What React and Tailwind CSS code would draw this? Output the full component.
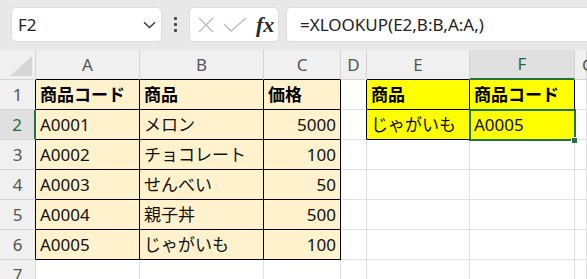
import React from "react";

const cols = [
  { key: "A", w: 104 },
  { key: "B", w: 124 },
  { key: "C", w: 77 },
  { key: "D", w: 26 },
  { key: "E", w: 103 },
  { key: "F", w: 105 },
  { key: "G", w: 12 },
];

const data = {
  1: { A: "商品コード", B: "商品", C: "価格", E: "商品", F: "商品コード" },
  2: { A: "A0001", B: "メロン", C: "5000", E: "じゃがいも", F: "A0005" },
  3: { A: "A0002", B: "チョコレート", C: "100" },
  4: { A: "A0003", B: "せんべい", C: "50" },
  5: { A: "A0004", B: "親子丼", C: "500" },
  6: { A: "A0005", B: "じゃがいも", C: "100" },
  7: {},
};

const GRID = "#e1e1e1";
const BLACK = "#000000";

function cellStyle(r, c) {
  const inOrange = r >= 1 && r <= 6 && (c === "A" || c === "B" || c === "C");
  const inYellow = r >= 1 && r <= 2 && (c === "E" || c === "F");
  let bg = "#ffffff";
  if (inOrange) bg = "#fff2cc";
  if (inYellow) bg = "#ffff00";
  let right = GRID;
  let bottom = GRID;
  if (inOrange || inYellow) {
    right = BLACK;
    bottom = BLACK;
  }
  if (c === "D" && r >= 1 && r <= 2) right = BLACK;
  return { bg, right, bottom };
}

export default function App() {
  const font = { fontFamily: '"Noto Sans", "Noto Sans CJK JP", sans-serif' };
  return (
    <div className="w-[587px] h-[279px] overflow-hidden bg-white flex flex-col" style={font}>
      {/* toolbar */}
      <div className="h-[50px] bg-[#e8e8e8] flex items-start pt-[7px] shrink-0">
        <div className="ml-[11px] w-[151px] h-[35px] bg-white rounded-[5px] border border-[#dcdcdc] flex items-center pl-[6px] pr-[5px]">
          <span className="text-[17px] text-[#222] flex-1 leading-none">F2</span>
          <svg width="13" height="8" viewBox="0 0 13 8" className="mt-[1px]">
            <path d="M1 1.2 L6.5 6.5 L12 1.2" fill="none" stroke="#333" strokeWidth="1.3" />
          </svg>
        </div>
        <div className="w-[27px] h-[35px] flex flex-col items-center justify-center gap-[3px]">
          <div className="w-[3px] h-[3px] bg-[#444] rounded-[1px]" />
          <div className="w-[3px] h-[3px] bg-[#444] rounded-[1px]" />
          <div className="w-[3px] h-[3px] bg-[#444] rounded-[1px]" />
        </div>
        <div className="w-[90px] h-[35px] bg-white rounded-[5px] border border-[#dcdcdc] flex items-center pl-[6px]">
          <svg width="18" height="18" viewBox="0 0 18 18" className="ml-[1px]">
            <path d="M2 2 L16 16 M16 2 L2 16" stroke="#b9b9b9" strokeWidth="1.3" fill="none" />
          </svg>
          <svg width="24" height="16" viewBox="0 0 24 16" className="ml-[8px]">
            <path d="M1 7 L8 14 L23 1" stroke="#b9b9b9" strokeWidth="1.3" fill="none" />
          </svg>
          <span
            className="ml-[9px] text-[22px] italic leading-none text-[#2b2b2b] font-semibold"
            style={{ fontFamily: '"Liberation Serif", "DejaVu Serif", serif' }}
          >
            fx
          </span>
        </div>
        <div className="ml-[7px] flex-1 h-[35px] bg-white rounded-l-[5px] border border-r-0 border-[#dcdcdc] flex items-center pl-[13px]">
          <span className="text-[17px] text-[#222] leading-none">=XLOOKUP(E2,B:B,A:A,)</span>
        </div>
      </div>

      {/* sheet */}
      <div className="relative flex-1">
        <div
          className="grid"
          style={{
            gridTemplateColumns: "36px " + cols.map((c) => c.w + "px").join(" "),
            gridTemplateRows: "30px repeat(7, 30px)",
          }}
        >
          {/* corner */}
          <div className="bg-[#f0f0f0] border-r border-b border-[#d4d4d4] flex items-end justify-end pr-[3px] pb-[3px]">
            <svg width="22" height="20" viewBox="0 0 22 20">
              <path d="M22 0 L22 20 L0 20 Z" fill="#d6d6d6" />
            </svg>
          </div>
          {cols.map((c) => {
            const sel = c.key === "F";
            const blackBottom = ["A", "B", "C", "E"].includes(c.key);
            const isG = c.key === "G";
            return (
              <div
                key={c.key}
                className={
                  "flex items-center text-[17px] border-r whitespace-nowrap " +
                  (isG ? "justify-start pl-[7px] " : "justify-center ") +
                  (sel
                    ? "bg-[#e0e0e0] text-[#1e6b41] border-b-2 border-b-[#217346] border-r-[#d4d4d4]"
                    : "bg-[#f0f0f0] text-[#555] border-b border-r-[#d4d4d4] " +
                      (blackBottom ? "border-b-black" : "border-b-[#d4d4d4]"))
                }
              >
                {c.key}
              </div>
            );
          })}
          {[1, 2, 3, 4, 5, 6, 7].map((r) => (
            <React.Fragment key={r}>
              <div
                className={
                  "flex items-center justify-center text-[17px] border-b border-b-[#d4d4d4] " +
                  (r === 2
                    ? "bg-[#e0e0e0] text-[#1e6b41] border-r-2 border-r-[#217346]"
                    : "bg-[#f0f0f0] text-[#555] border-r " +
                      (r <= 6 ? "border-r-black" : "border-r-[#d4d4d4]"))
                }
              >
                {r}
              </div>
              {cols.map((c) => {
                const s = cellStyle(r, c.key);
                const v = data[r][c.key];
                const bold = r === 1;
                const right = c.key === "C" && r >= 2;
                return (
                  <div
                    key={c.key}
                    className={
                      "border-r border-b flex items-center overflow-hidden whitespace-nowrap text-[17px] " +
                      (right ? "justify-end pr-[4px] " : "pl-[4px] ") +
                      (bold ? "font-bold text-black" : "text-[#111]")
                    }
                    style={{ backgroundColor: s.bg, borderRightColor: s.right, borderBottomColor: s.bottom }}
                  >
                    {v}
                  </div>
                );
              })}
            </React.Fragment>
          ))}
        </div>
        {/* selection */}
        <div className="absolute left-[469px] top-[59px] w-[107px] h-[32px] border-2 border-[#217346] pointer-events-none" />
        <div className="absolute left-[571px] top-[87px] w-[7px] h-[7px] bg-[#217346] border border-white" />
      </div>
    </div>
  );
}
